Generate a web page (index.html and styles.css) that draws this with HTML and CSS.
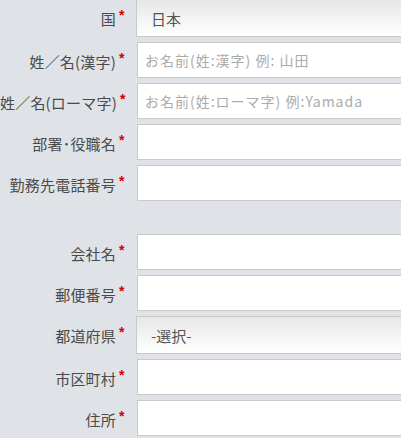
FILE: index.html
```html
<!DOCTYPE html>
<html lang="ja">
<head>
<meta charset="utf-8">
<title>Form</title>
<link rel="stylesheet" href="styles.css">
</head>
<body>
<form class="form">
  <div class="group">
    <div class="row">
      <label class="label"><span class="text">国</span><span class="req">*</span></label>
      <div class="control sel"><span class="sel-text">日本</span></div>
    </div>
    <div class="row">
      <label class="label"><span class="text">姓／名(漢字)</span><span class="req">*</span></label>
      <input class="control field" type="text" placeholder="お名前(姓:漢字) 例: 山田">
    </div>
    <div class="row">
      <label class="label"><span class="text">姓／名(ローマ字)</span><span class="req">*</span></label>
      <input class="control field" type="text" placeholder="お名前(姓:ローマ字) 例:Yamada">
    </div>
    <div class="row">
      <label class="label"><span class="text">部署･役職名</span><span class="req">*</span></label>
      <input class="control field" type="text">
    </div>
    <div class="row">
      <label class="label"><span class="text">勤務先電話番号</span><span class="req">*</span></label>
      <input class="control field" type="text">
    </div>
  </div>
  <div class="group second">
    <div class="row">
      <label class="label"><span class="text">会社名</span><span class="req">*</span></label>
      <input class="control field" type="text">
    </div>
    <div class="row">
      <label class="label"><span class="text">郵便番号</span><span class="req">*</span></label>
      <input class="control field" type="text">
    </div>
    <div class="row">
      <label class="label"><span class="text">都道府県</span><span class="req">*</span></label>
      <div class="control sel"><span class="sel-text">-選択-</span></div>
    </div>
    <div class="row">
      <label class="label"><span class="text">市区町村</span><span class="req">*</span></label>
      <input class="control field" type="text">
    </div>
    <div class="row">
      <label class="label"><span class="text">住所</span><span class="req">*</span></label>
      <input class="control field" type="text">
    </div>
  </div>
</form>
</body>
</html>
```

FILE: styles.css
```css
html, body {
  margin: 0;
  padding: 0;
  background: #dfe3e7;
  overflow: hidden;
}

body {
  width: 401px;
  height: 438px;
  font-family: "Noto Sans CJK JP", "Noto Sans", sans-serif;
  color: #444;
}

.form {
  width: 401px;
  margin: -1px 0 0 0;
  display: flex;
  flex-direction: column;
  overflow: hidden;
}

.group {
  display: flex;
  flex-direction: column;
  gap: 5px;
}

.second {
  margin-top: 33px;
}

.row {
  display: grid;
  grid-template-columns: 127px 300px;
  column-gap: 10px;
  align-items: start;
}

.label {
  display: flex;
  justify-content: flex-end;
  align-items: flex-start;
  padding-top: 12px;
  font-size: 15px;
  line-height: 15px;
  color: #4a4a4a;
  white-space: nowrap;
}

.text {
  letter-spacing: 0.2px;
}

.req {
  font-family: "Liberation Sans", sans-serif;
  font-weight: bold;
  font-size: 14px;
  line-height: 14px;
  color: #d40000;
  margin-left: 3px;
  margin-top: -3px;
  width: 8px;
}

.control {
  box-sizing: border-box;
  border: 1px solid #c9c9c9;
  background: #fff;
  margin: 0;
}

.field {
  height: 36px;
  padding: 0 7px;
  font-family: "Noto Sans CJK JP", "Noto Sans", sans-serif;
  font-size: 14px;
  letter-spacing: 1px;
  color: #444;
  outline: none;
}

.field::placeholder {
  color: #ababab;
}

.sel {
  height: 38px;
  margin-left: -1px;
  padding: 0 14px;
  display: flex;
  align-items: center;
  background: linear-gradient(to bottom, #e7e7e7, #ffffff);
  font-size: 15px;
  color: #555;
}

.sel-text {
  padding-top: 1px;
}
```
